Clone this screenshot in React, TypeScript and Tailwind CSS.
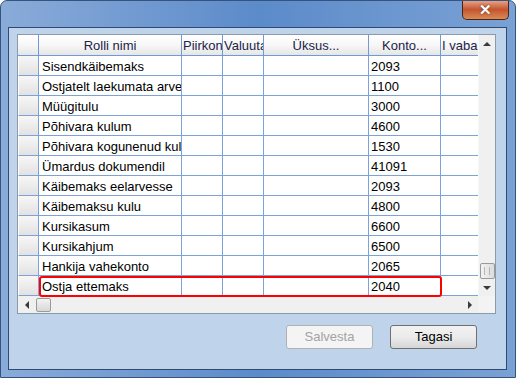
import React from 'react';

const rows = [
  ['Sisendkäibemaks', '2093'],
  ['Ostjatelt laekumata arvete nõuded', '1100'],
  ['Müügitulu', '3000'],
  ['Põhivara kulum', '4600'],
  ['Põhivara kogunenud kulum', '1530'],
  ['Ümardus dokumendil', '41091'],
  ['Käibemaks eelarvesse', '2093'],
  ['Käibemaksu kulu', '4800'],
  ['Kursikasum', '6600'],
  ['Kursikahjum', '6500'],
  ['Hankija vahekonto', '2065'],
  ['Ostja ettemaks', '2040'],
];

const gridCols = 'grid grid-cols-[21px_143px_41px_41px_105px_72px_37px]';
const cell = 'h-5 border-b border-r border-[#7ba3da] overflow-hidden whitespace-nowrap';
const headCell =
  'h-[21px] border-b border-r border-[#6f9ad6] bg-gradient-to-b from-white via-[#f7f7f7] to-[#e6e6e6] text-[#1b2448] overflow-hidden whitespace-nowrap leading-[21px]';

function Tri({ dir }: { dir: 'up' | 'down' | 'left' | 'right' }) {
  const pts = {
    up: '0,4 4,0 8,4',
    down: '0,0 8,0 4,4',
    left: '4,0 4,8 0,4',
    right: '0,0 0,8 4,4',
  }[dir];
  const vert = dir === 'up' || dir === 'down';
  return (
    <svg width={vert ? 8 : 4} height={vert ? 4 : 8} viewBox={vert ? '0 0 8 4' : '0 0 4 8'}>
      <polygon points={pts} fill="#3a3a3a" />
    </svg>
  );
}

export default function App() {
  return (
    <div
      className="w-[516px] h-[378px] flex flex-col pl-[7px] pr-[8px] pb-[7px] rounded-t-[7px] border border-[#34537d] bg-gradient-to-r from-[#8aabd9] via-[#5c8bca] to-[#7aa1d4] overflow-hidden"
      style={{ fontFamily: '"Liberation Sans", Arial, sans-serif' }}
    >
      {/* title bar */}
      <div className="h-[27px] flex justify-end -mt-px -mr-[2px]">
        <div className="w-[47px] h-[20px] rounded-b-[5px] border border-t-0 border-[#4b2418] bg-gradient-to-b from-[#e9a98e] via-[#c4552f] to-[#d98a55] flex items-center justify-center">
          <span className="text-white font-bold text-[15px] leading-none [text-shadow:0_0_2px_#5a2010]">✕</span>
        </div>
      </div>

      {/* client area */}
      <div className="flex-1 border border-[#2d4a70] bg-[#bfd3eb] flex flex-col">
        <div className="ml-2 mt-[6px] w-[479px] border border-[#8c99a8] bg-white flex flex-col text-[13px] text-black">
          <div className="flex">
            <div className="relative">
              {/* header */}
              <div className={gridCols}>
                <div className={headCell}></div>
                <div className={headCell + ' text-center'}>Rolli nimi</div>
                <div className={headCell + ' pl-px'}>Piirkond</div>
                <div className={headCell + ' pl-px'}>Valuuta</div>
                <div className={headCell + ' text-center'}>Üksus...</div>
                <div className={headCell + ' text-center'}>Konto...</div>
                <div className={headCell + ' border-r-0 pl-px'}>I vaba</div>
              </div>
              {/* rows */}
              {rows.map(([name, konto]) => (
                <div key={name + konto} className={gridCols}>
                  <div className={cell + ' bg-gradient-to-b from-[#f7f7f7] to-[#e2e2e2] border-l border-l-white'}></div>
                  <div className={cell + ' pl-[3px] leading-[21px]'}>{name}</div>
                  <div className={cell}></div>
                  <div className={cell}></div>
                  <div className={cell}></div>
                  <div className={cell + ' pl-[2px] leading-[21px]'}>{konto}</div>
                  <div className={cell + ' border-r-0'}></div>
                </div>
              ))}
              {/* selection marker */}
              <div className="absolute left-[21px] top-[241px] w-[403px] h-[21px] border-2 border-[#ff0000] rounded-[3px]"></div>
            </div>

            {/* vertical scrollbar */}
            <div className="w-[17px] bg-[#f0f0f0] border-l border-[#f7f7f7] flex flex-col items-center">
              <div className="h-[17px] flex items-center justify-center">
                <Tri dir="up" />
              </div>
              <div className="flex-1"></div>
              <div className="w-[15px] h-[16px] rounded-[2px] border border-[#9a9a9a] bg-gradient-to-r from-[#f3f3f3] to-[#dcdcdc] flex items-center justify-center">
                <div className="w-[6px] h-[8px] border-x border-[#b5b5b5]"></div>
              </div>
              <div className="h-[17px] flex items-center justify-center">
                <Tri dir="down" />
              </div>
            </div>
          </div>

          {/* horizontal scrollbar */}
          <div className="flex h-[17px]">
            <div className="w-[460px] bg-[#f0f0f0] flex items-center">
              <div className="w-[18px] flex justify-center">
                <Tri dir="left" />
              </div>
              <div className="w-[15px] h-[14px] rounded-[2px] border border-[#9a9a9a] bg-gradient-to-b from-[#f3f3f3] to-[#d8d8d8]"></div>
              <div className="flex-1"></div>
              <div className="w-[17px] flex justify-center">
                <Tri dir="right" />
              </div>
            </div>
            <div className="w-[17px] bg-[#f3f3f3]"></div>
          </div>
        </div>

        {/* buttons */}
        <div className="flex justify-end gap-[17px] pr-[29px] mt-[11px] text-[13px]">
          <button className="w-[87px] h-[24px] rounded-[3px] border border-[#adb2b5] bg-[#f4f4f4] text-[#a3a3a3]">
            Salvesta
          </button>
          <button className="w-[87px] h-[24px] rounded-[3px] border border-[#707070] bg-gradient-to-b from-[#f2f2f2] via-[#ebebeb] to-[#d6d6d6] text-black">
            Tagasi
          </button>
        </div>
      </div>
    </div>
  );
}
